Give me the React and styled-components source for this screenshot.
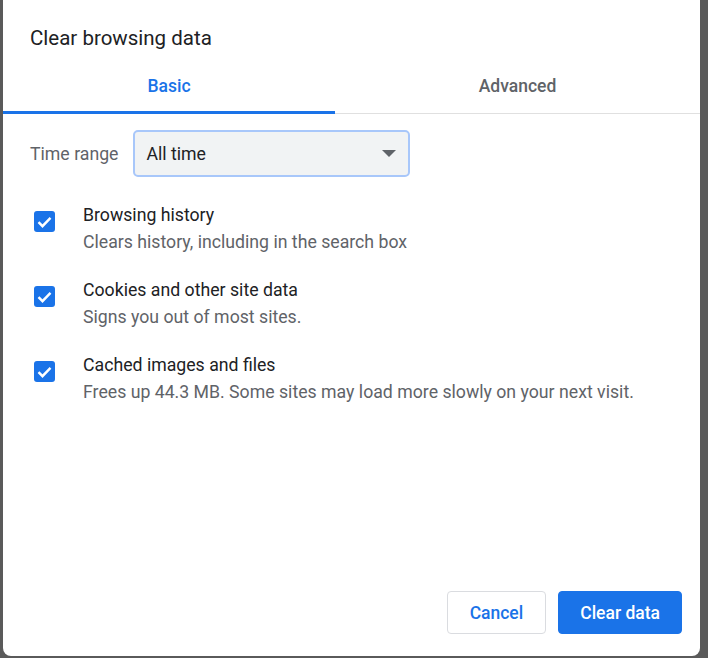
import React from "react";
import styled, { createGlobalStyle } from "styled-components";

const Global = createGlobalStyle`
  html, body { margin: 0; height: 100%; background: #5a5a5a; }
  body { font-family: Roboto, "Liberation Sans", sans-serif; }
`;

const Dialog = styled.div`
  box-sizing: border-box;
  margin: 0 8px 0 3px;
  height: 656px;
  background: #fff;
  border-radius: 0 0 8px 8px;
  display: flex;
  flex-direction: column;
`;

const Title = styled.h1`
  margin: 0;
  padding: 26px 0 0 27px;
  height: 56px;
  box-sizing: border-box;
  font-size: 20.5px;
  font-weight: 400;
  color: #202124;
`;

const Tabs = styled.div`
  display: flex;
  border-bottom: 1px solid #e0e0e0;
`;

const Tab = styled.div`
  flex: ${(p) => (p.$active ? "0 0 332px" : "1")};
  text-align: center;
  height: 58px;
  box-sizing: border-box;
  padding-top: 20px;
  font-size: 17.5px;
  font-weight: 500;
  color: ${(p) => (p.$active ? "#1a73e8" : "#5f6368")};
  border-bottom: 3px solid ${(p) => (p.$active ? "#1a73e8" : "transparent")};
  margin-bottom: -1px;
`;

const Body = styled.div`
  flex: 1;
  padding: 16px 27px 0 27px;
`;

const RangeRow = styled.div`
  display: flex;
  align-items: center;
  gap: 15px;
  margin-bottom: 28px;
`;

const Label = styled.span`
  font-size: 17.7px;
  color: #5f6368;
`;

const Select = styled.div`
  box-sizing: border-box;
  width: 277px;
  height: 47px;
  border: 2px solid #a8c7fa;
  border-radius: 5px;
  background: #f1f3f4;
  display: flex;
  align-items: center;
  justify-content: space-between;
  padding: 0 12px 0 11px;
  font-size: 17.7px;
  color: #202124;
`;

const Option = styled.div`
  display: flex;
  align-items: flex-start;
  margin-bottom: 28px;
`;

const Check = styled.div`
  width: 21px;
  height: 21px;
  border-radius: 3px;
  background: #1a73e8;
  margin-top: 6px;
  margin-left: 4px;
  margin-right: 28px;
  display: flex;
  align-items: center;
  justify-content: center;
`;

const Texts = styled.div`
  display: flex;
  flex-direction: column;
  gap: 7px;
`;

const OptTitle = styled.div`
  font-size: 17.7px;
  color: #202124;
`;

const OptSub = styled.div`
  font-size: 17.7px;
  color: #5f6368;
`;

const Footer = styled.div`
  display: flex;
  justify-content: flex-end;
  gap: 12px;
  padding: 0 18px 22px 0;
`;

const Button = styled.button`
  height: 43px;
  padding: 0 ${(p) => (p.$primary ? "21px" : "22px")};
  border-radius: 4px;
  font: 500 17.5px Roboto, "Liberation Sans", sans-serif;
  border: 1px solid ${(p) => (p.$primary ? "#1a73e8" : "#dadce0")};
  background: ${(p) => (p.$primary ? "#1a73e8" : "#fff")};
  color: ${(p) => (p.$primary ? "#fff" : "#1a73e8")};
`;

const options = [
  ["Browsing history", "Clears history, including in the search box"],
  ["Cookies and other site data", "Signs you out of most sites."],
  ["Cached images and files", "Frees up 44.3 MB. Some sites may load more slowly on your next visit."],
];

export default function App() {
  return (
    <>
      <Global />
      <Dialog>
        <Title>Clear browsing data</Title>
        <Tabs>
          <Tab $active>Basic</Tab>
          <Tab>Advanced</Tab>
        </Tabs>
        <Body>
          <RangeRow>
            <Label>Time range</Label>
            <Select>
              All time
              <svg width="14" height="8" viewBox="0 0 14 8"><path d="M0 0h14L7 7z" fill="#5f6368" /></svg>
            </Select>
          </RangeRow>
          {options.map(([t, s]) => (
            <Option key={t}>
              <Check>
                <svg width="15" height="12" viewBox="0 0 15 12">
                  <path d="M1.5 6.2l4 4L13.5 1.8" stroke="#fff" strokeWidth="2.4" fill="none" />
                </svg>
              </Check>
              <Texts>
                <OptTitle>{t}</OptTitle>
                <OptSub>{s}</OptSub>
              </Texts>
            </Option>
          ))}
        </Body>
        <Footer>
          <Button>Cancel</Button>
          <Button $primary>Clear data</Button>
        </Footer>
      </Dialog>
    </>
  );
}
